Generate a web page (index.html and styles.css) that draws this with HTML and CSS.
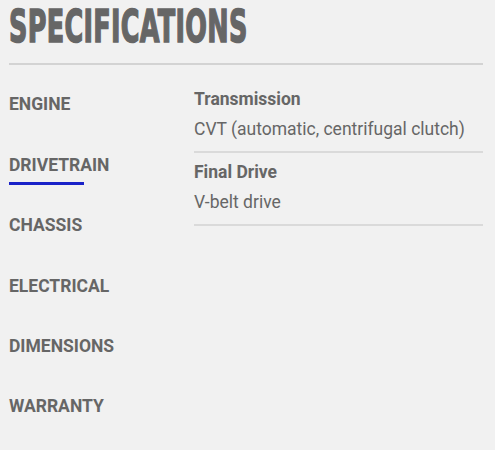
FILE: index.html
```html
<!DOCTYPE html>
<html>
<head>
<meta charset="utf-8">
<link rel="stylesheet" href="styles.css">
</head>
<body>
<div class="page">
  <h1 class="title"><span class="title-text">SPECIFICATIONS</span></h1>
  <div class="rule"></div>
  <div class="specs">
    <nav class="tabs">
      <div class="tab">ENGINE</div>
      <div class="tab active">DRIVETRAIN</div>
      <div class="tab">CHASSIS</div>
      <div class="tab">ELECTRICAL</div>
      <div class="tab">DIMENSIONS</div>
      <div class="tab">WARRANTY</div>
    </nav>
    <div class="details">
      <div class="item">
        <div class="label">Transmission</div>
        <div class="value">CVT (automatic, centrifugal clutch)</div>
      </div>
      <div class="item">
        <div class="label">Final Drive</div>
        <div class="value">V-belt drive</div>
      </div>
    </div>
  </div>
</div>
</body>
</html>
```
FILE: styles.css
```css
html, body {
  margin: 0;
  padding: 0;
  background: #f1f1f1;
}
.page {
  padding: 0 12px 0 9px;
  font-family: Roboto, "Noto Sans", sans-serif;
  color: #666;
}
.title {
  margin: 0;
  padding-top: 2px;
  height: 50px;
  font-family: "DejaVu Sans", sans-serif;
  font-weight: bold;
  font-size: 44px;
  line-height: 50px;
  color: #666;
  white-space: nowrap;
}
.title-text {
  display: inline-block;
  transform: scaleX(0.58);
  transform-origin: left center;
  letter-spacing: 0.5px;
  -webkit-text-stroke: 1.6px #666;
}
.rule {
  margin-top: 11px;
  height: 2px;
  background: #d3d3d3;
}
.specs {
  display: grid;
  grid-template-columns: 185px 1fr;
  margin-top: 15.4px;
}
.tabs {
  display: flex;
  flex-direction: column;
  padding-top: 13px;
}
.tab {
  font-weight: bold;
  font-size: 17.5px;
  line-height: 22px;
  height: 60.4px;
  position: relative;
}
.tab.active::after {
  content: "";
  position: absolute;
  left: 0;
  top: 28.6px;
  width: 75px;
  height: 3px;
  background: #1a22c8;
}
.details {
  display: flex;
  flex-direction: column;
}
.item {
  border-bottom: 2px solid #dadada;
  padding: 8px 0 11px;
}
.label {
  font-weight: bold;
  font-size: 17.5px;
  line-height: 22px;
}
.value {
  font-size: 17.5px;
  line-height: 22px;
  margin-top: 8px;
}
```
